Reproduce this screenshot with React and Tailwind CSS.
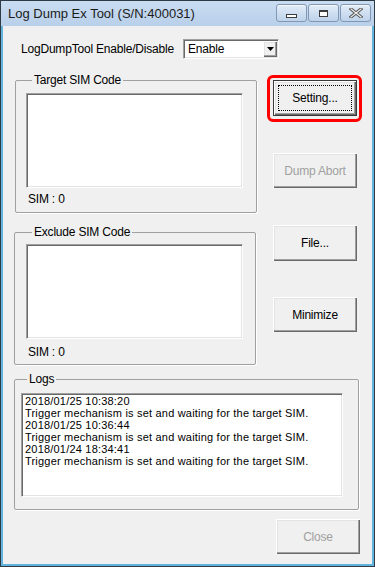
import React from "react"

const sunken = "border border-t-[#a0a0a0] border-l-[#a0a0a0] border-r-white border-b-white shadow-[inset_1px_1px_0_#696969,inset_-1px_-1px_0_#e3e3e3] bg-white"
const raised = "shadow-[inset_1px_1px_0_#fff,inset_-1px_-1px_0_#696969,inset_-2px_-2px_0_#a0a0a0,inset_2px_2px_0_#e3e3e3]"

const Btn = ({ children, disabled, def, className }) => (
  <button
    className={`relative flex items-center justify-center bg-[#f0f0f0] text-[12px] leading-[14px] ${raised} ${def ? "border border-[#3a3a3a]" : ""} ${disabled ? "text-[#a0a0a0]" : "text-black"} ${className}`}
  >
    {def && <span className="absolute inset-[4px] border border-dotted border-black"></span>}
    {children}
  </button>
)

const CapBtn = ({ children }) => (
  <div className="w-[31px] h-[18px] rounded-[3px] border border-[#8197b3] bg-gradient-to-b from-[#e4edf8] via-[#cfdff1] to-[#bdd2ea] shadow-[inset_0_1px_0_#f4f8fc] flex items-center justify-center">
    {children}
  </div>
)

const Group = ({ title, className, children }) => (
  <fieldset className={`border border-[#a0a0a0] rounded-[2px] shadow-[1px_1px_0_#fff] ${className}`}>
    <legend className="ml-[6px] px-[2px] text-[12px] leading-[14px] text-black">{title}</legend>
    {children}
  </fieldset>
)

const logs = [
  "2018/01/25 10:38:20",
  "Trigger mechanism is set and waiting for the target SIM.",
  "2018/01/25 10:36:44",
  "Trigger mechanism is set and waiting for the target SIM.",
  "2018/01/24 18:34:41",
  "Trigger mechanism is set and waiting for the target SIM.",
]

const App = () => {
  return (
    <div className="w-[375px] h-[567px] flex flex-col border border-[#2e3a44] bg-[#62b3de] overflow-hidden font-['Liberation_Sans',Arial,sans-serif] tracking-[-0.2px]">
      {/* title bar */}
      <div className="h-[25px] shrink-0 flex items-start justify-between pl-[7px] pr-[3px] pt-[3px] bg-gradient-to-b from-[#c9dcf1] to-[#b9d0ea]">
        <div className="mt-[2px] text-[13px] leading-[15px] text-[#1b1b1b] tracking-normal">Log Dump Ex Tool (S/N:400031)</div>
        <div className="flex gap-[1px]">
          <CapBtn>
            <div className="w-[11px] h-[4px] mt-[5px] border border-[#3c3c3c] bg-white"></div>
          </CapBtn>
          <CapBtn>
            <div className="w-[9px] h-[7px] border border-[#3c3c3c] bg-white shadow-[inset_0_1px_0_#3c3c3c]"></div>
          </CapBtn>
          <CapBtn>
            <svg width="14" height="10" viewBox="0 0 14 10">
              <path d="M2 1 L12 9 M12 1 L2 9" stroke="#5a5a5a" strokeWidth="3.2" strokeLinecap="square" />
              <path d="M2 1 L12 9 M12 1 L2 9" stroke="#f4f4f4" strokeWidth="1.2" strokeLinecap="square" />
            </svg>
          </CapBtn>
        </div>
      </div>

      {/* body */}
      <div className="flex-1 mx-[2px] mb-[2px] bg-[#f0f0f0] pl-[11px] pt-[13px] flex flex-col text-[12px] text-black">
        <div className="flex items-center h-[20px]">
          <div className="ml-[7px] w-[162px] leading-[14px]">LogDumpTool Enable/Disable</div>
          <div className={`w-[96px] h-[20px] flex items-center justify-between pl-[4px] pr-[1px] ${sunken}`}>
            <span className="leading-[14px]">Enable</span>
            <div className={`w-[14px] h-[16px] bg-[#f0f0f0] flex items-center justify-center ${raised}`}>
              <svg width="7" height="4" viewBox="0 0 7 4"><path d="M0 0H7L3.5 4Z" fill="#000" /></svg>
            </div>
          </div>
        </div>

        <div className="flex mt-[14px]">
          <div className="w-[242px] flex flex-col">
            <Group title="Target SIM Code" className="ml-px w-[242px] h-[140px] pl-[10px]">
              <div className={`mt-[6px] w-[217px] h-[95px] ${sunken}`}></div>
              <div className="mt-[5px] ml-[2px] leading-[12px]">SIM : 0</div>
            </Group>
            <Group title="Exclude SIM Code" className="mt-[12px] w-[242px] h-[140px] pl-[11px]">
              <div className={`mt-[5px] w-[217px] h-[95px] ${sunken}`}></div>
              <div className="mt-[7px] ml-[2px] leading-[12px]">SIM : 0</div>
            </Group>
          </div>

          <div className="ml-[11px] flex flex-col items-start">
            <div className="mt-[2px] border-[3px] border-[#ff0000] rounded-[6px] pl-[3px] pt-[2px] pr-[2px] pb-[3px]">
              <Btn def className="w-[84px] h-[36px]">Setting...</Btn>
            </div>
            <Btn disabled className="ml-[6px] mt-[31px] w-[84px] h-[35px]">Dump Abort</Btn>
            <Btn className="ml-[6px] mt-[37px] w-[84px] h-[36px]">File...</Btn>
            <Btn className="ml-[6px] mt-[36px] w-[84px] h-[35px]">Minimize</Btn>
          </div>
        </div>

        <Group title="Logs" className="mt-[7px] w-[345px] h-[138px] pl-[6px]">
          <div className={`mt-[7px] w-[322px] h-[104px] pl-[3px] pt-[1px] ${sunken}`}>
            {logs.map((l, i) => (
              <div key={i} className="text-[11px] leading-[12px] tracking-[0.2px] whitespace-nowrap">{l}</div>
            ))}
          </div>
        </Group>

        <Btn disabled className="ml-[262px] mt-[9px] w-[84px] h-[35px]">Close</Btn>
      </div>
    </div>
  )
}

export default App
